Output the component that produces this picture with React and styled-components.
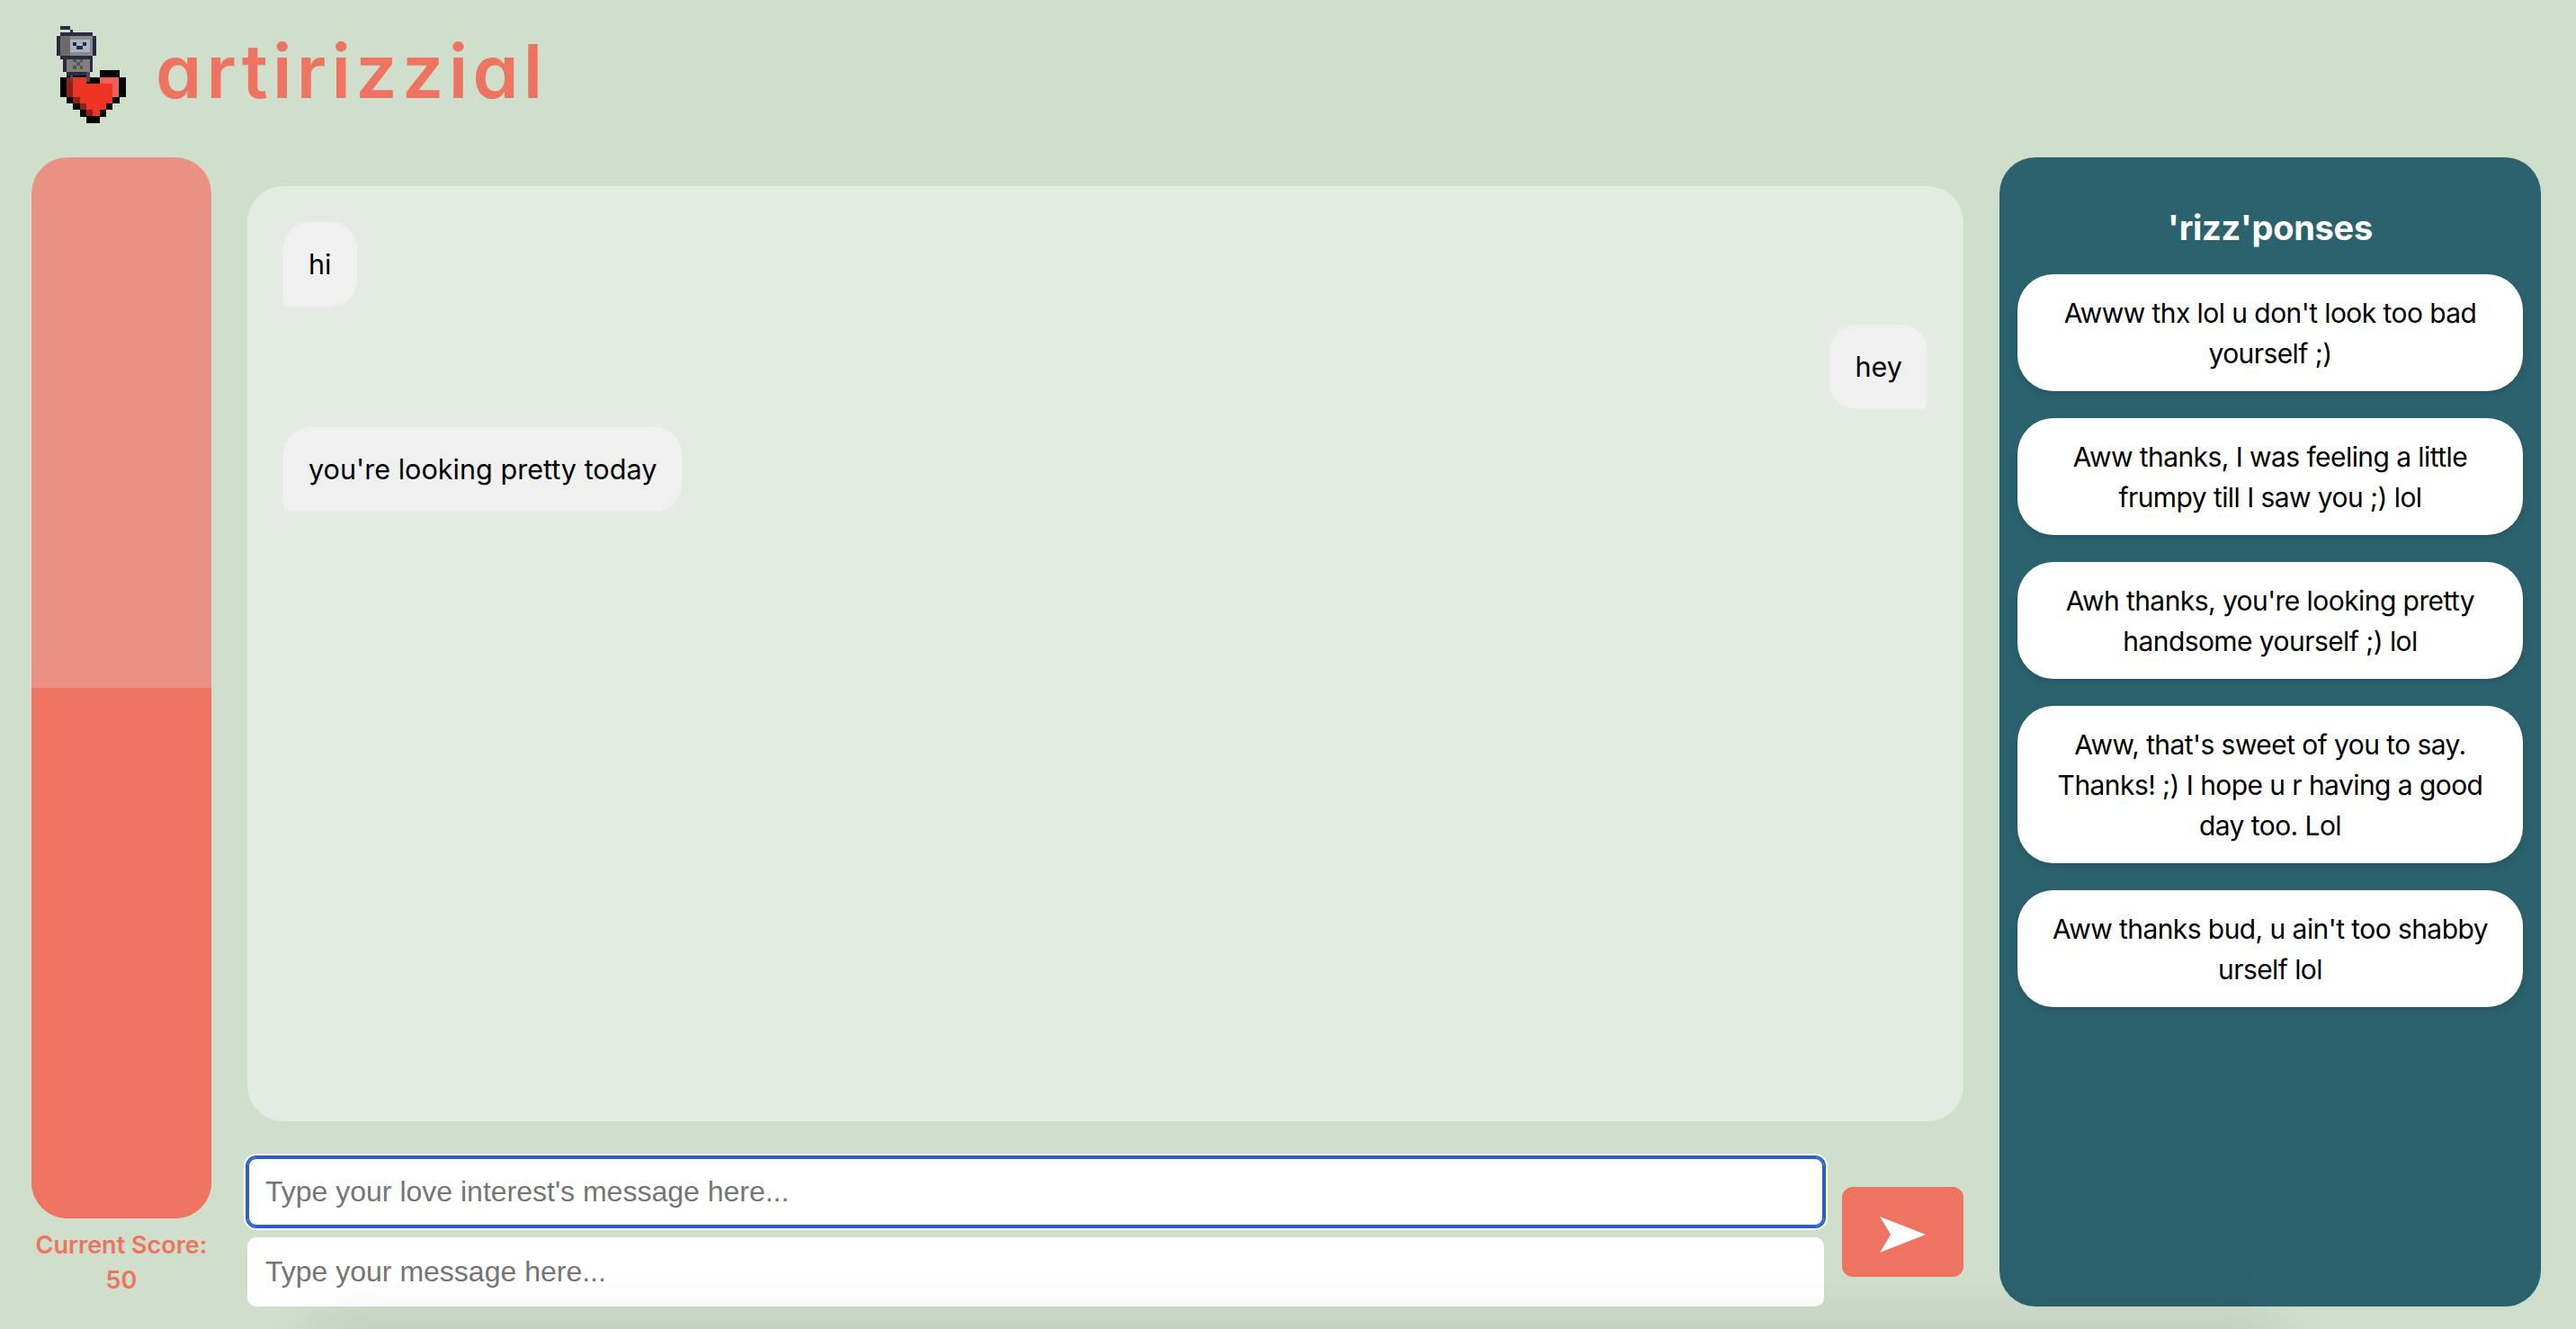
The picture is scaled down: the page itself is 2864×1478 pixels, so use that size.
import React from 'react';
import styled, { createGlobalStyle } from 'styled-components';

const GlobalStyle = createGlobalStyle`
  * {
    box-sizing: border-box;
  }

  html, body {
    margin: 0;
    padding: 0;
    background: #d0decc;
  }

  body {
    font-family: "Inter", "Liberation Sans", sans-serif;
  }
`;

const Page = styled.div`
  position: relative;
  width: 2864px;
  height: 1478px;
  overflow: hidden;
  background: #d0decc;
`;

/* soft shadow that leaks in from something below the fold */
const BottomShadow = styled.div`
  position: absolute;
  left: 370px;
  right: 350px;
  top: 1494px;
  height: 40px;
  box-shadow: 0 0 70px 14px rgba(0, 0, 0, 0.13);
  pointer-events: none;
`;

const Header = styled.header`
  display: flex;
  align-items: flex-start;
  height: 175px;
  padding: 29px 0 0 63px;
`;

const Brand = styled.h1`
  margin: 1px 0 0 32px;
  font-family: "Inter", "Liberation Sans", sans-serif;
  font-feature-settings: "cv11" 1;
  font-size: 82px;
  line-height: 100px;
  font-weight: 600;
  letter-spacing: 5.3px;
  color: #ee7361;
`;

const Main = styled.main`
  display: flex;
  gap: 40px;
  height: 1278px;
  padding: 0 39px 0 35px;
`;

const ScoreColumn = styled.section`
  display: flex;
  flex-direction: column;
  flex: none;
  width: 200px;
`;

const Meter = styled.div`
  display: flex;
  flex-direction: column;
  justify-content: flex-end;
  height: 1180px;
  border-radius: 40px;
  overflow: hidden;
  background: #ea9184;
`;

const MeterFill = styled.div`
  background: #ee7361;
`;

const ScoreLabel = styled.p`
  margin: 10px 0 0;
  font-feature-settings: "cv11" 1;
  font-size: 27px;
  line-height: 39px;
  font-weight: 600;
  text-align: center;
  color: #ee7361;
`;

const ChatColumn = styled.section`
  display: flex;
  flex-direction: column;
  flex: 1;
  min-width: 0;
  padding-top: 32px;
`;

const ChatWindow = styled.div`
  display: flex;
  flex-direction: column;
  align-items: flex-start;
  gap: 20px;
  height: 1040px;
  padding: 40px;
  border-radius: 40px;
  background: #e3ebe3;
`;

const Bubble = styled.div`
  align-self: ${(p) => (p.$mine ? 'flex-end' : 'flex-start')};
  padding: 24px 28px;
  border-radius: ${(p) => (p.$mine ? '30px 30px 6px 30px' : '30px 30px 30px 6px')};
  background: #f0f0f0;
  font-size: 30.6px;
  line-height: 46px;
  color: #000;
`;

const Composer = styled.div`
  display: flex;
  align-items: center;
  gap: 20px;
  margin-top: 40px;
`;

const InputStack = styled.div`
  display: flex;
  flex-direction: column;
  gap: 12px;
  flex: 1;
`;

const MessageInput = styled.input`
  display: block;
  width: 100%;
  height: 77px;
  padding: 0 20px;
  border: none;
  border-radius: 10px;
  outline: none;
  background: #fff;
  font-family: "Liberation Sans", Arial, sans-serif;
  font-size: 32px;
  color: #000;
  box-shadow: ${(p) => (p.$focused ? 'inset 0 0 0 2px #2a5fc9, 0 0 0 2px #2a5fc9, 0 0 0 4px #fff' : 'none')};

  &::placeholder {
    color: #757575;
    opacity: 1;
  }
`;

const SendButton = styled.button`
  display: flex;
  align-items: center;
  justify-content: center;
  flex: none;
  width: 135px;
  height: 100px;
  padding: 8px 0 0;
  border: none;
  border-radius: 12px;
  background: #ee7361;
`;

const ResponsePanel = styled.aside`
  display: flex;
  flex-direction: column;
  flex: none;
  gap: 30px;
  width: 602px;
  padding: 0 20px;
  border-radius: 40px;
  background: #2c626e;
`;

const PanelTitle = styled.h2`
  display: flex;
  align-items: center;
  justify-content: center;
  height: 100px;
  margin: 28px 0 -28px;
  font-size: 38px;
  font-weight: 700;
  letter-spacing: -0.3px;
  color: #fff;
`;

const ResponseCard = styled.div`
  padding: 21px 20px 19px;
  border-radius: 40px;
  background: #fff;
  box-shadow: 0 4px 8px rgba(0, 0, 0, 0.12);
  font-size: 30px;
  line-height: 45px;
  letter-spacing: -0.57px;
  text-align: center;
  color: #000;
`;

const messages = [
  { text: 'hi' },
  { text: 'hey', mine: true },
  { text: "you're looking pretty today" },
];

const responses = [
  "Awww thx lol u don't look too bad yourself ;)",
  'Aww thanks, I was feeling a little frumpy till I saw you ;) lol',
  "Awh thanks, you're looking pretty handsome yourself ;) lol",
  "Aww, that's sweet of you to say. Thanks! ;) I hope u r having a good day too. Lol",
  "Aww thanks bud, u ain't too shabby urself lol",
];

// [col, row, width, height, colour] on a 3.67px grid, robot first
const INK = '#2a2a40';
const SPOT = '#4c5a52';
const robotCells = [
  [1, 0, 3, 1, INK], [4, 1, 1, 1, INK], [1, 2, 10, 1, INK],
  [0, 3, 1, 6, INK], [11, 3, 1, 6, INK], [1, 9, 10, 1, INK],
  [1, 3, 10, 6, '#8a8987'], [1, 3, 3, 6, '#6c6b67'],
  [4, 4, 6, 4, '#a6b5c3'], [5, 5, 1, 1, INK], [8, 5, 1, 1, INK], [6, 6, 2, 1, INK],
  [2, 10, 1, 4, INK], [10, 10, 1, 4, INK], [3, 10, 7, 4, '#807f7e'],
  [5, 10, 1, 1, SPOT], [7, 10, 1, 1, SPOT], [6, 11, 1, 1, SPOT], [5, 12, 1, 1, SPOT], [7, 12, 1, 1, SPOT],
  [3, 14, 6, 1, INK], [4, 15, 1, 2, '#4a4a5c'], [9, 14, 1, 3, '#4a4a5c'],
];

// heart on a grid of twice that pitch: k black, d dark red, r red, l light red
const heartRows = [
  '.kkk..kkk.',
  'kdrrkklllk',
  'kdrrrrrrlk',
  'kdrrrrrrlk',
  '.kdrrrrrk.',
  '..kdrrrk..',
  '...kdrk...',
  '....kk....',
];
const heartColours = { k: '#000', d: '#8e2015', r: '#ee3524', l: '#f0605a' };

const Logo = () => (
  <svg width="78" height="108" viewBox="0 0 78 108" shapeRendering="crispEdges" style={{ flex: 'none' }}>
    {heartRows.map((row, y) =>
      row.split('').map((c, x) =>
        c === '.' ? null : (
          <rect key={`${x}-${y}`} x={3.7 + x * 7.3} y={49.3 + y * 7.3} width="7.4" height="7.4" fill={heartColours[c]} />
        )
      )
    )}
    {robotCells.map(([x, y, w, h, fill], i) => (
      <rect key={i} x={x * 3.67} y={y * 3.67} width={w * 3.67} height={h * 3.67} fill={fill} />
    ))}
  </svg>
);

const SendIcon = () => (
  <svg width="52" height="42" viewBox="0 0 52 42">
    <path d="M0 0 L51 20 L0 40 L12 20 Z" fill="#fff" />
  </svg>
);

const App = () => {
  const score = 50;

  return (
    <Page>
      <GlobalStyle />
      <Header>
        <Logo />
        <Brand>artirizzial</Brand>
      </Header>
      <Main>
        <ScoreColumn>
          <Meter>
            <MeterFill style={{ height: `${score}%` }} />
          </Meter>
          <ScoreLabel>
            Current Score:
            <br />
            {score}
          </ScoreLabel>
        </ScoreColumn>
        <ChatColumn>
          <ChatWindow>
            {messages.map((m) => (
              <Bubble key={m.text} $mine={m.mine}>
                {m.text}
              </Bubble>
            ))}
          </ChatWindow>
          <Composer>
            <InputStack>
              <MessageInput $focused placeholder="Type your love interest's message here..." />
              <MessageInput placeholder="Type your message here..." />
            </InputStack>
            <SendButton>
              <SendIcon />
            </SendButton>
          </Composer>
        </ChatColumn>
        <ResponsePanel>
          <PanelTitle>'rizz'ponses</PanelTitle>
          {responses.map((r) => (
            <ResponseCard key={r}>{r}</ResponseCard>
          ))}
        </ResponsePanel>
      </Main>
      <BottomShadow />
    </Page>
  );
};

export default App;
